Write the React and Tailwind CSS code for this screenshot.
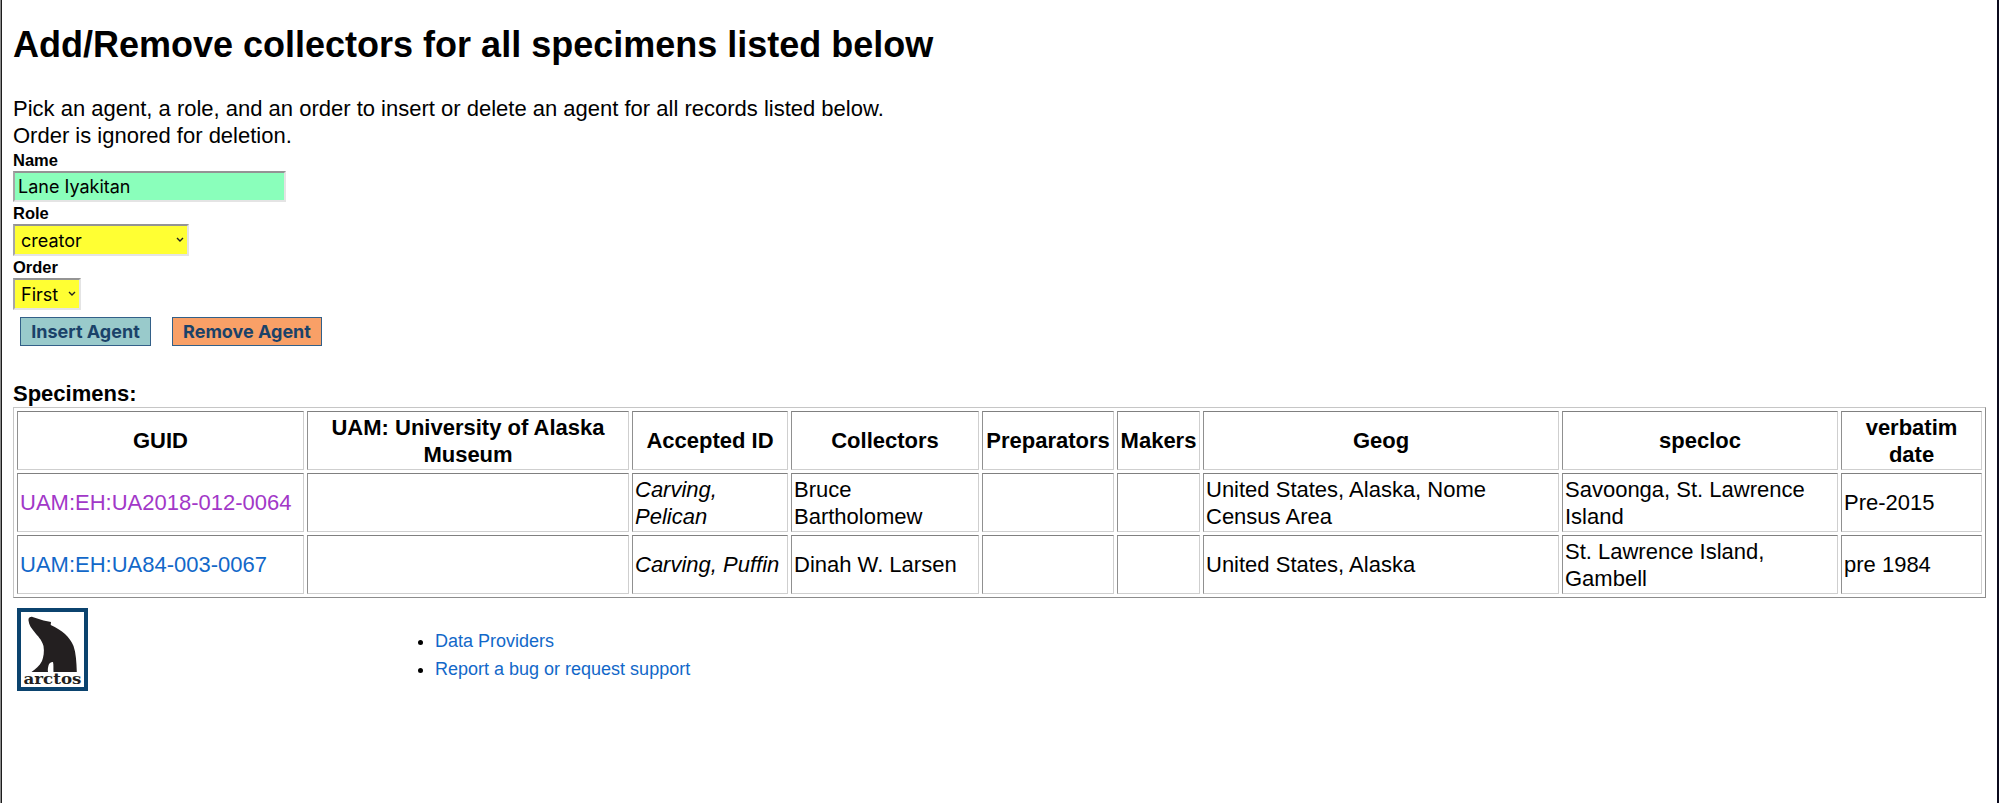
import React from "react";

const columns = [
  ["GUID", "w-[287px]"],
  ["UAM: University of Alaska Museum", "w-[322px]"],
  ["Accepted ID", "w-[156px]"],
  ["Collectors", "w-[188px]"],
  ["Preparators", "w-[132px]"],
  ["Makers", "w-[83px]"],
  ["Geog", "w-[356px]"],
  ["specloc", "w-[276px]"],
  ["verbatim date", "w-[141px]"],
];

const rows = [
  {
    guid: "UAM:EH:UA2018-012-0064",
    visited: true,
    id: "Carving, Pelican",
    collectors: "Bruce Bartholomew",
    geog: "United States, Alaska, Nome Census Area",
    loc: "Savoonga, St. Lawrence Island",
    date: "Pre-2015",
  },
  {
    guid: "UAM:EH:UA84-003-0067",
    visited: false,
    id: "Carving, Puffin",
    collectors: "Dinah W. Larsen",
    geog: "United States, Alaska",
    loc: "St. Lawrence Island, Gambell",
    date: "pre 1984",
  },
];

const cell =
  "h-[59px] border border-t-[#808080] border-l-[#909090] border-r-[#cfcfcf] border-b-[#cfcfcf] px-[2px] py-0 align-middle leading-[27px]";
const field =
  "flex items-center border-2 border-t-[#949494] border-l-[#a6a6a6] border-r-[#e4e4e4] border-b-[#e4e4e4] font-['Inter',sans-serif] text-[18px]";
const label = "text-[16.5px] font-bold leading-[22px]";

function Chevron() {
  return (
    <svg width="8" height="6" viewBox="0 0 8 6" fill="none" stroke="#222" strokeWidth="1.4">
      <path d="M1 1l3 3 3-3" />
    </svg>
  );
}

function Logo() {
  return (
    <svg width="71" height="83" viewBox="0 0 71 83">
      <rect width="71" height="83" fill="#0b436e" />
      <rect x="4" y="4" width="63" height="75" fill="#fff" />
      <path
        d="M11.5 11.5c0-2 2-3 4-2.6l11 3.6 5 1 2.500.500-.300 3C45 22 53 29 56.500 38c2.500 7 3 16 3.300 26H36.500c-.2-4 .2-7-.5-10-2.500 0-4 1.500-4.500 3.500-.4 2-1 4-.500 6.500H14.500c4-3 8-6 10.500-11 1.500-4 2.500-9 1.500-15-2-7-6-10-9-14-3-3.500-5.500-7-6-11.500z"
        fill="#231f20"
      />
      <text
        x="6.500"
        y="76"
        textLength="58"
        lengthAdjust="spacingAndGlyphs"
        fontFamily="DejaVu Serif"
        fontWeight="bold"
        fontSize="15"
        fill="#231f20"
      >
        arctos
      </text>
    </svg>
  );
}

export default function App() {
  return (
    <div className="flex h-[803px] w-[1999px] overflow-hidden border-l border-r-2 border-l-[#8c8c8c] border-r-[#0b0a1c] bg-white font-['Liberation_Sans',Arial,sans-serif] text-[22px] text-black">
      <div className="flex w-full flex-col border-l border-l-[#1c1c1c] pl-[11px]">
        <h1 className="mt-[24px] text-[36px] font-bold leading-[42px]">
          Add/Remove collectors for all specimens listed below
        </h1>
        <p className="mt-[29px] leading-[27px]">
          Pick an agent, a role, and an order to insert or delete an agent for all records listed below.
          <br />
          Order is ignored for deletion.
        </p>
        <div className={label}>Name</div>
        <div className={`${field} h-[31px] w-[273px] bg-[#8affbb] pl-[3px]`}>Lane Iyakitan</div>
        <div className={label}>Role</div>
        <div className={`${field} h-[32px] w-[176px] justify-between bg-[#ffff33] pr-[3px] pl-[6px]`}>
          creator
          <Chevron />
        </div>
        <div className={label}>Order</div>
        <div className={`${field} h-[32px] w-[68px] justify-between bg-[#ffff33] pr-[3px] pl-[6px]`}>
          First
          <Chevron />
        </div>
        <div className="mt-[7px] ml-[7px] flex gap-[21px] font-['Inter',sans-serif] text-[18px] font-bold text-[#1a4269]">
          <button className="h-[29px] w-[131px] border border-[#336088] bg-[#99cacb] leading-[27px]">
            Insert Agent
          </button>
          <button className="h-[29px] w-[150px] border border-[#336088] bg-[#f9a067] leading-[27px]">
            Remove Agent
          </button>
        </div>
        <div className="mt-[34px] font-bold leading-[27px]">Specimens:</div>
        <table className="w-[1973px] table-fixed border-separate border-spacing-[3px] border border-t-[#c6c6c6] border-l-[#c6c6c6] border-r-[#8c8c8c] border-b-[#8c8c8c]">
          <colgroup>
            {columns.map(([name, width]) => (
              <col key={name} className={width} />
            ))}
          </colgroup>
          <thead>
            <tr>
              {columns.map(([name]) => (
                <th key={name} className={cell}>
                  {name}
                </th>
              ))}
            </tr>
          </thead>
          <tbody>
            {rows.map((r) => (
              <tr key={r.guid}>
                <td className={cell}>
                  <a className={r.visited ? "text-[#a238c8]" : "text-[#1268c9]"}>{r.guid}</a>
                </td>
                <td className={cell} />
                <td className={`${cell} italic`}>{r.id}</td>
                <td className={cell}>{r.collectors}</td>
                <td className={cell} />
                <td className={cell} />
                <td className={cell}>{r.geog}</td>
                <td className={cell}>{r.loc}</td>
                <td className={cell}>{r.date}</td>
              </tr>
            ))}
          </tbody>
        </table>
        <footer className="mt-[10px] flex pl-[4px]">
          <Logo />
          <ul className="mt-[19px] ml-[347px] list-disc text-[18px] leading-[28px] marker:text-black">
            <li><a className="text-[#1268c9]">Data Providers</a></li>
            <li><a className="text-[#1268c9]">Report a bug or request support</a></li>
          </ul>
        </footer>
      </div>
    </div>
  );
}
